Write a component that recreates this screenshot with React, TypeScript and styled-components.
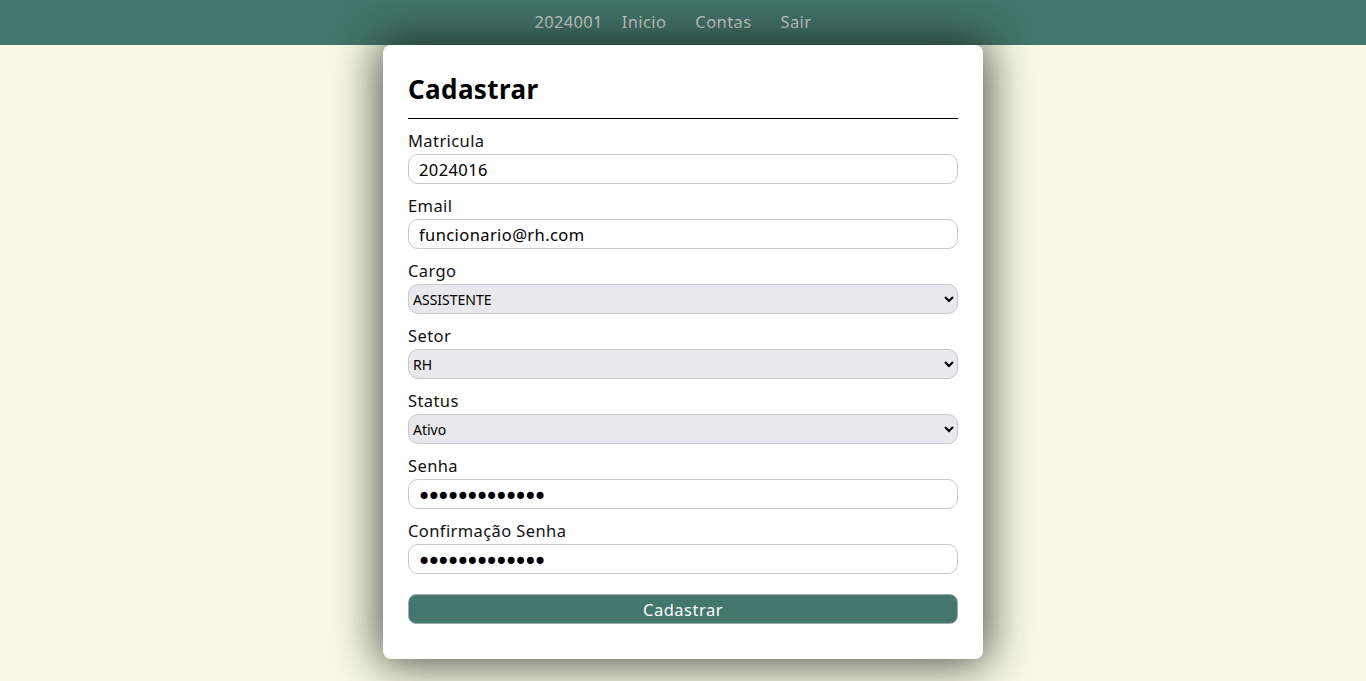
import React from "react";
import styled, { createGlobalStyle } from "styled-components";

const Global = createGlobalStyle`
  html, body { margin: 0; padding: 0; }
  body {
    background: #F8FAE5;
    font-family: "Noto Sans", "Open Sans", sans-serif;
    min-height: 681px;
    overflow: hidden;
  }
  * { box-sizing: border-box; }
`;

const Nav = styled.nav`
  height: 45px;
  background: #43766C;
  display: flex;
  align-items: center;
  justify-content: center;
  position: relative;
  z-index: 1;
`;

const NavList = styled.div`
  display: flex;
  align-items: center;
  padding-right: 20px;
  padding-bottom: 2px;
`;

const NavUser = styled.span`
  color: #cfd3cf;
  font-size: 16.5px;
  letter-spacing: 0.3px;
  margin-right: 19px;
`;

const NavLink = styled.a<{ $last?: boolean }>`
  color: #cfd3cf;
  font-size: 16.5px;
  letter-spacing: 0.4px;
  text-decoration: none;
  margin-right: ${(p) => (p.$last ? "0" : "29px")};
`;

const Main = styled.main`
  display: flex;
  justify-content: center;
`;

const Card = styled.form`
  width: 600px;
  background: #fff;
  border-radius: 8px;
  padding: 25px 25px 35px;
  display: flex;
  flex-direction: column;
  box-shadow: 0 0 45px 5px rgba(20, 25, 15, 0.75);
  position: relative;
  z-index: 2;
`;

const Title = styled.h2`
  margin: 0;
  font-size: 26px;
  font-weight: 700;
  letter-spacing: 0.4px;
  color: #000;
  line-height: 38px;
`;

const Rule = styled.hr`
  border: none;
  border-top: 1px solid #000;
  margin: 10px 0 11px;
  height: 0;
`;

const Group = styled.div`
  display: flex;
  flex-direction: column;
  margin-bottom: 11px;
`;

const Label = styled.label`
  font-size: 16.5px;
  letter-spacing: 0.4px;
  line-height: 24px;
  color: #111;
  margin-top: -1px;
  margin-bottom: 1px;
`;

const Input = styled.input<{ $pw?: boolean }>`
  height: 30px;
  border: 1px solid #c8c8c8;
  border-radius: 10px;
  padding: ${(p) => (p.$pw ? "5px 10px 0 8px" : "0 10px")};
  font-family: ${(p) => (p.$pw ? `"DejaVu Sans", sans-serif` : "inherit")};
  font-size: ${(p) => (p.$pw ? "24px" : "16.5px")};
  letter-spacing: ${(p) => (p.$pw ? "-4.5px" : "0.4px")};
  color: #000;
  background: #fff;
  outline: none;
`;

const Select = styled.select`
  height: 30px;
  border: 1px solid #c8c8c8;
  border-radius: 10px;
  padding: 0;
  font-family: inherit;
  font-size: 14px;
  color: #000;
  background: #e9e9ed;
  outline: none;
`;

const Button = styled.button`
  margin-top: 9px;
  height: 30px;
  border: 1px solid #9fb3ad;
  border-radius: 8px;
  background: #43766C;
  color: #fff;
  font-family: inherit;
  font-size: 16.5px;
  letter-spacing: 0.5px;
`;

export default function App() {
  return (
    <>
      <Global />
      <Nav>
        <NavList>
          <NavUser>2024001</NavUser>
          <NavLink href="#">Inicio</NavLink>
          <NavLink href="#">Contas</NavLink>
          <NavLink href="#" $last>Sair</NavLink>
        </NavList>
      </Nav>
      <Main>
        <Card onSubmit={(e) => e.preventDefault()}>
          <Title>Cadastrar</Title>
          <Rule />
          <Group>
            <Label>Matricula</Label>
            <Input defaultValue="2024016" />
          </Group>
          <Group>
            <Label>Email</Label>
            <Input defaultValue="funcionario@rh.com" />
          </Group>
          <Group>
            <Label>Cargo</Label>
            <Select defaultValue="ASSISTENTE">
              <option>ASSISTENTE</option>
              <option>ANALISTA</option>
              <option>GERENTE</option>
            </Select>
          </Group>
          <Group>
            <Label>Setor</Label>
            <Select defaultValue="RH">
              <option>RH</option>
              <option>TI</option>
              <option>FINANCEIRO</option>
            </Select>
          </Group>
          <Group>
            <Label>Status</Label>
            <Select defaultValue="Ativo">
              <option>Ativo</option>
              <option>Inativo</option>
            </Select>
          </Group>
          <Group>
            <Label>Senha</Label>
            <Input type="password" defaultValue="funcionario12" $pw />
          </Group>
          <Group>
            <Label>Confirmação Senha</Label>
            <Input type="password" defaultValue="funcionario12" $pw />
          </Group>
          <Button type="submit">Cadastrar</Button>
        </Card>
      </Main>
    </>
  );
}
